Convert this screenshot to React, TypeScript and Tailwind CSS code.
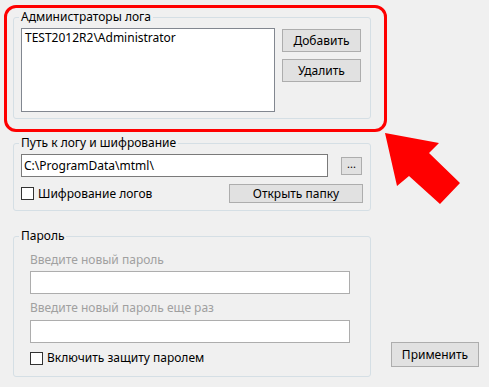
const Btn = ({ label, cls }: { label: string; cls: string }) => (
  <div
    className={`flex items-center justify-center bg-[#e1e1e1] border border-[#adadad] text-black ${cls}`}
  >
    {label}
  </div>
);

const Check = ({ label }: { label: string }) => (
  <div className="flex items-center gap-[4px]">
    <div className="w-[13px] h-[13px] bg-white border border-[#333333]" />
    <span>{label}</span>
  </div>
);

const App = () => {
  return (
    <div
      className="relative w-[489px] h-[387px] bg-[#f0f0f0] overflow-hidden text-[12px] leading-[16px] text-black"
      style={{ fontFamily: '"Noto Sans", "Open Sans", sans-serif' }}
    >
      <div className="pl-[13px] pt-[9px]">
        {/* Администраторы лога */}
        <fieldset className="w-[358px] border border-[#d5dfe5] rounded-[3px]">
          <legend className="ml-[5px] px-[2px]">Администраторы лога</legend>
          <div className="flex mt-[3px] px-[7px] pb-[6px]">
            <div className="w-[254px] h-[84px] bg-white border border-[#828790] px-[3px] pt-[1px]">
              TEST2012R2\Administrator
            </div>
            <div className="flex flex-col gap-[7px] ml-[7px] mt-[1px]">
              <Btn label="Добавить" cls="w-[79px] h-[23px]" />
              <Btn label="Удалить" cls="w-[79px] h-[23px]" />
            </div>
          </div>
        </fieldset>

        {/* Путь к логу и шифрование */}
        <fieldset className="w-[358px] mt-[16px] border border-[#d5dfe5] rounded-[3px]">
          <legend className="ml-[5px] px-[2px]">Путь к логу и шифрование</legend>
          <div className="px-[7px] pb-[7px]">
            <div className="flex items-center mt-[3px]">
              <div className="w-[307px] h-[23px] bg-white border border-[#7a7a7a] px-[2px] flex items-center">
                C:\ProgramData\mtml\
              </div>
              <Btn label="..." cls="w-[21px] h-[18px] ml-[13px] text-[11px] leading-none pb-[4px]" />
            </div>
            <div className="flex items-center justify-between mt-[7px] h-[19px]">
              <Check label="Шифрование логов" />
              <Btn label="Открыть папку" cls="w-[134px] h-[19px]" />
            </div>
          </div>
        </fieldset>

        {/* Пароль */}
        <div className="flex items-end mt-[17px]">
          <fieldset className="w-[358px] h-[149px] border border-[#d5dfe5] rounded-[3px]">
            <legend className="ml-[5px] px-[2px]">Пароль</legend>
            <div className="pl-[16px] pb-[10px]">
              <div className="mt-[8px] text-[#a0a0a0]">Введите новый пароль</div>
              <div className="w-[320px] h-[23px] mt-[3px] bg-white border border-[#adadad]" />
              <div className="mt-[6px] text-[#a0a0a0]">Введите новый пароль еще раз</div>
              <div className="w-[320px] h-[23px] mt-[4px] bg-white border border-[#adadad]" />
              <div className="mt-[7px]">
                <Check label="Включить защиту паролем" />
              </div>
            </div>
          </fieldset>
          <Btn label="Применить" cls="w-[88px] h-[25px] ml-[20px] mb-[10px] border-[#7a7a7a]" />
        </div>
      </div>

      {/* annotation */}
      <div className="absolute left-[4px] top-[5px] w-[383px] h-[127px] border-[3px] border-[#ff0000] rounded-[12px]" />
      <svg className="absolute left-[380px] top-[125px]" width="90" height="90" viewBox="380 125 90 90">
        <polygon
          points="385,133 439,143 429,153 460,183 440,204 409,176 397,186"
          fill="#ff0000"
        />
      </svg>
    </div>
  );
};

export default App;
